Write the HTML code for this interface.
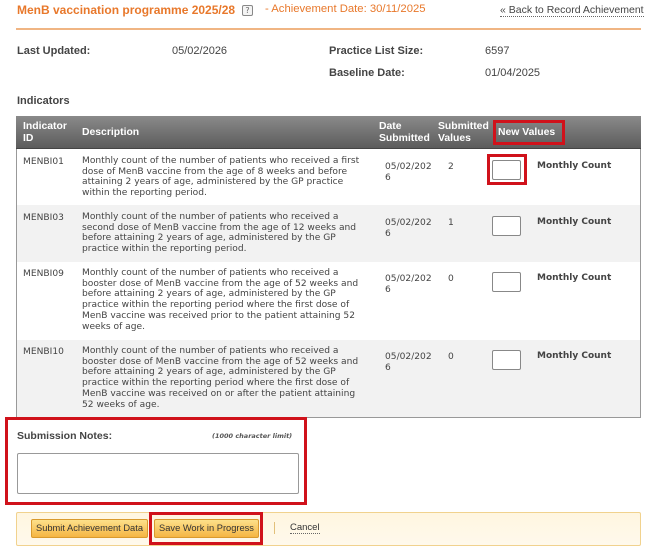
<!DOCTYPE html>
<html><head><style>
*{margin:0;padding:0;box-sizing:border-box}
body{width:650px;height:554px;background:#fff;font-family:"DejaVu Sans",Verdana,sans-serif;color:#444;position:relative;overflow:hidden;font-size:9.1px}
.a{position:absolute;white-space:nowrap}
.b{font-weight:bold}
.L{font-family:"Liberation Sans",Arial,sans-serif}
.red{position:absolute;border:3px solid #d0121b}
.row{position:absolute;left:16px;width:625px;border-left:1px solid #999;border-right:1px solid #999}
.d{line-height:10.7px}
.box{position:absolute;width:29px;height:20px;border:1px solid #888;border-radius:2px;background:#fff}
.h{color:#fff;font-size:10.4px;line-height:12px}
.mc{font-size:9px}
.lb{font-size:11px}
</style></head><body>
<div class="a b L" style="left:17px;top:3px;font-size:12px;color:#e8782b">MenB vaccination programme 2025/28</div>
<div class="a" style="left:242px;top:5px;width:11px;height:11px;border:1px solid #888;border-radius:2px;font-size:8px;color:#666;text-align:center;line-height:9px;background:#f4f4f4">?</div>
<div class="a L" style="left:265px;top:3px;font-size:11.3px;color:#e8782b">- Achievement Date: 30/11/2025</div>
<div class="a L" style="left:500px;top:4px;font-size:10.5px;color:#444;border-bottom:1px dotted #666;line-height:12px">« Back to Record Achievement</div>
<div class="a" style="left:16px;top:28px;width:625px;height:2px;background:#f0b583"></div>

<div class="a b L lb" style="left:17px;top:45px">Last Updated:</div>
<div class="a L lb" style="left:172px;top:45px">05/02/2026</div>
<div class="a b L lb" style="left:329px;top:45px">Practice List Size:</div>
<div class="a L lb" style="left:485px;top:45px">6597</div>
<div class="a b L lb" style="left:329px;top:67px">Baseline Date:</div>
<div class="a L lb" style="left:485px;top:67px">01/04/2025</div>
<div class="a b L lb" style="left:17px;top:95px">Indicators</div>

<div class="a" style="left:16px;top:116px;width:625px;height:33px;background:linear-gradient(#8a8a8a,#5c5c5c);border-bottom:1px solid #444"></div>
<div class="a b L h" style="left:23px;top:121px">Indicator<br>ID</div>
<div class="a b L h" style="left:82px;top:127px">Description</div>
<div class="a b L h" style="left:379px;top:121px">Date<br>Submitted</div>
<div class="a b L h" style="left:438px;top:121px">Submitted<br>Values</div>
<div class="a b L h" style="left:498px;top:127px">New Values</div>
<div class="red" style="left:493px;top:120px;width:72px;height:25px"></div>

<div class="row" style="top:149px;height:56px;background:#fff"></div>
<div class="row" style="top:205px;height:57px;background:#f2f2f2"></div>
<div class="row" style="top:262px;height:78px;background:#fff"></div>
<div class="row" style="top:340px;height:78px;background:#f2f2f2;border-bottom:1px solid #999"></div>

<div class="a" style="left:23px;top:157px">MENBI01</div>
<div class="a d" style="left:82px;top:156px">Monthly count of the number of patients who received a first<br>dose of MenB vaccine from the age of 8 weeks and before<br>attaining 2 years of age, administered by the GP practice<br>within the reporting period.</div>
<div class="a d" style="left:385px;top:162px">05/02/202<br>6</div>
<div class="a" style="left:448px;top:162px">2</div>
<div class="box" style="left:492px;top:160px"></div>
<div class="red" style="left:487px;top:154px;width:40px;height:31px"></div>
<div class="a b mc" style="left:537px;top:161px">Monthly Count</div>

<div class="a" style="left:23px;top:213px">MENBI03</div>
<div class="a d" style="left:82px;top:212px">Monthly count of the number of patients who received a<br>second dose of MenB vaccine from the age of 12 weeks and<br>before attaining 2 years of age, administered by the GP<br>practice within the reporting period.</div>
<div class="a d" style="left:385px;top:218px">05/02/202<br>6</div>
<div class="a" style="left:448px;top:218px">1</div>
<div class="box" style="left:492px;top:216px"></div>
<div class="a b mc" style="left:537px;top:217px">Monthly Count</div>

<div class="a" style="left:23px;top:269px">MENBI09</div>
<div class="a d" style="left:82px;top:268px">Monthly count of the number of patients who received a<br>booster dose of MenB vaccine from the age of 52 weeks and<br>before attaining 2 years of age, administered by the GP<br>practice within the reporting period where the first dose of<br>MenB vaccine was received prior to the patient attaining 52<br>weeks of age.</div>
<div class="a d" style="left:385px;top:274px">05/02/202<br>6</div>
<div class="a" style="left:448px;top:274px">0</div>
<div class="box" style="left:492px;top:272px"></div>
<div class="a b mc" style="left:537px;top:273px">Monthly Count</div>

<div class="a" style="left:23px;top:347px">MENBI10</div>
<div class="a d" style="left:82px;top:346px">Monthly count of the number of patients who received a<br>booster dose of MenB vaccine from the age of 52 weeks and<br>before attaining 2 years of age, administered by the GP<br>practice within the reporting period where the first dose of<br>MenB vaccine was received on or after the patient attaining<br>52 weeks of age.</div>
<div class="a d" style="left:385px;top:352px">05/02/202<br>6</div>
<div class="a" style="left:448px;top:352px">0</div>
<div class="box" style="left:492px;top:350px"></div>
<div class="a b mc" style="left:537px;top:351px">Monthly Count</div>

<div class="red" style="left:5px;top:417px;width:302px;height:88px"></div>
<div class="a b L" style="left:17px;top:430px;font-size:10.5px">Submission Notes:</div>
<div class="a b" style="left:212px;top:432px;font-size:6.5px;font-style:italic;color:#555">(1000 character limit)</div>
<div class="a" style="left:17px;top:453px;width:282px;height:41px;border:1px solid #999;border-radius:2px;background:#fff"></div>

<div class="a" style="left:16px;top:512px;width:625px;height:34px;border:1px solid #f1d28e;border-radius:2px;background:linear-gradient(#fff6e0,#fff9ec)"></div>
<div class="a L" style="left:31px;top:519px;width:117px;height:19px;background:linear-gradient(#fde08a,#f5b544);border:1px solid #d99a2e;border-radius:2px;font-size:9.3px;color:#333;text-align:center;line-height:17px">Submit Achievement Data</div>
<div class="a L" style="left:154px;top:519px;width:105px;height:19px;background:linear-gradient(#fde08a,#f5b544);border:1px solid #d99a2e;border-radius:2px;font-size:9.3px;color:#333;text-align:center;line-height:17px">Save Work in Progress</div>
<div class="red" style="left:149px;top:512px;width:114px;height:33px"></div>
<div class="a" style="left:274px;top:522px;width:1px;height:12px;background:#e2c07a"></div>
<div class="a L" style="left:290px;top:522px;font-size:9.5px;color:#333;border-bottom:1px dotted #666;line-height:11px">Cancel</div>
</body></html>
